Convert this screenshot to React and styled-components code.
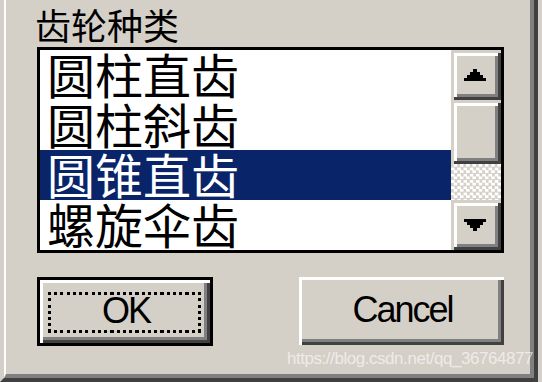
import React from "react";
import styled, { createGlobalStyle } from "styled-components";

const GlobalStyle = createGlobalStyle`
  html, body { margin: 0; padding: 0; background: #d4d0c8; overflow: hidden; }
  * { box-sizing: border-box; }
`;

const Frame = styled.div`
  width: 538px;
  height: 382px;
  border-left: 4px solid #d4d0c8;
  border-right: 4px solid #404040;
  border-bottom: 4px solid #404040;
  display: flex;
`;

const FrameInner = styled.div`
  flex: 1;
  border-left: 2px solid #ffffff;
  border-right: 4px solid #808080;
  border-bottom: 4px solid #808080;
  background: #d4d0c8;
  padding-left: 31px;
  display: flex;
  flex-direction: column;
  position: relative;
`;

const Label = styled.div`
  height: 47px;
  line-height: 49px;
  margin-left: -2px;
  font-family: "Noto Sans CJK SC", sans-serif;
  font-size: 36px;
  color: #000;
  white-space: nowrap;
`;

const ListBox = styled.div`
  width: 467px;
  height: 206px;
  border: 3px solid #000;
  background: #fff;
  display: flex;
`;

const Items = styled.div`
  flex: 1;
  display: flex;
  flex-direction: column;
`;

const Item = styled.div`
  height: 50px;
  line-height: 46px;
  padding-left: 7px;
  font-family: "Noto Sans CJK SC", sans-serif;
  font-size: 48px;
  white-space: nowrap;
  overflow: hidden;
  background: ${(p) => (p.$selected ? "#0a246a" : "#ffffff")};
  color: ${(p) => (p.$selected ? "#ffffff" : "#000000")};
`;

const ScrollBar = styled.div`
  width: 50px;
  display: flex;
  flex-direction: column;
`;

const bevel = `
  background: #d4d0c8;
  box-shadow: inset 3px 3px 0 #d4d0c8, inset -3px -3px 0 #404040,
    inset 6px 6px 0 #ffffff, inset -6px -6px 0 #808080;
`;

const ScrollButton = styled.div`
  height: 50px;
  ${bevel}
  display: flex;
  align-items: center;
  justify-content: center;
  padding-right: 3px;
`;

const Thumb = styled.div`
  height: 64px;
  ${bevel}
`;

const Track = styled.div`
  flex: 1;
  background: repeating-conic-gradient(#ffffff 0 25%, #d4d0c8 0 50%) 0 0 / 6.25px 6.25px;
`;

const Arrow = styled.svg`
  width: 22px;
  height: 12.5px;
  display: block;
  shape-rendering: crispEdges;
`;

const ButtonRow = styled.div`
  width: 467px;
  margin-top: 24px;
  display: flex;
  justify-content: space-between;
`;

const Button = styled.div`
  width: ${(p) => p.$w}px;
  height: ${(p) => (p.$default ? 69 : 68)}px;
  border: ${(p) => (p.$default ? "3px solid #000" : "none")};
  background: #d4d0c8;
  box-shadow: inset 3px 3px 0 #ffffff, inset -3px -3px 0 #404040,
    inset -6px -6px 0 #808080;
  display: flex;
  align-items: center;
  justify-content: center;
  font-family: "Liberation Sans", Arial, sans-serif;
  font-size: 36px;
  letter-spacing: -2px;
  color: #000;
  position: relative;
`;

const FocusRect = styled.div`
  position: absolute;
  left: 8px;
  top: 12px;
  right: 9px;
  bottom: 10px;
  background:
    repeating-linear-gradient(90deg, #000 0 3px, transparent 3px 6.25px) left top / 100% 3px no-repeat,
    repeating-linear-gradient(90deg, #000 0 3px, transparent 3px 6.25px) left bottom / 100% 3px no-repeat,
    repeating-linear-gradient(180deg, #000 0 3px, transparent 3px 6.25px) left top / 3px 100% no-repeat,
    repeating-linear-gradient(180deg, #000 0 3px, transparent 3px 6.25px) right top / 3px 100% no-repeat;
`;

const ButtonText = styled.span`
  position: relative;
  top: -1px;
  margin-right: -2px;
`;

const Watermark = styled.div`
  position: absolute;
  right: -3px;
  top: 349px;
  font-family: "Liberation Sans", Arial, sans-serif;
  font-size: 17px;
  letter-spacing: -0.45px;
  color: rgba(255, 255, 255, 0.62);
  white-space: nowrap;
`;

const UpArrow = () => (
  <Arrow viewBox="0 0 7 4">
    <path d="M3 0h1v1h1v1h1v1h1v1H0V3h1V2h1V1h1z" fill="#000" />
  </Arrow>
);

const DownArrow = () => (
  <Arrow viewBox="0 0 7 4">
    <path d="M0 0h7v1H6v1H5v1H4v1H3V3H2V2H1V1H0z" fill="#000" />
  </Arrow>
);

const items = ["圆柱直齿", "圆柱斜齿", "圆锥直齿", "螺旋伞齿"];

export default function App() {
  return (
    <>
      <GlobalStyle />
      <Frame>
        <FrameInner>
          <Label>齿轮种类</Label>
          <ListBox>
            <Items>
              {items.map((t, i) => (
                <Item key={t} $selected={i === 2}>
                  {t}
                </Item>
              ))}
            </Items>
            <ScrollBar>
              <ScrollButton>
                <UpArrow />
              </ScrollButton>
              <Thumb />
              <Track />
              <ScrollButton>
                <DownArrow />
              </ScrollButton>
            </ScrollBar>
          </ListBox>
          <ButtonRow>
            <Button $w={176} $default>
              <FocusRect />
              <ButtonText>OK</ButtonText>
            </Button>
            <Button $w={205}>
              <ButtonText>Cancel</ButtonText>
            </Button>
          </ButtonRow>
          <Watermark>https://blog.csdn.net/qq_36764877</Watermark>
        </FrameInner>
      </Frame>
    </>
  );
}
